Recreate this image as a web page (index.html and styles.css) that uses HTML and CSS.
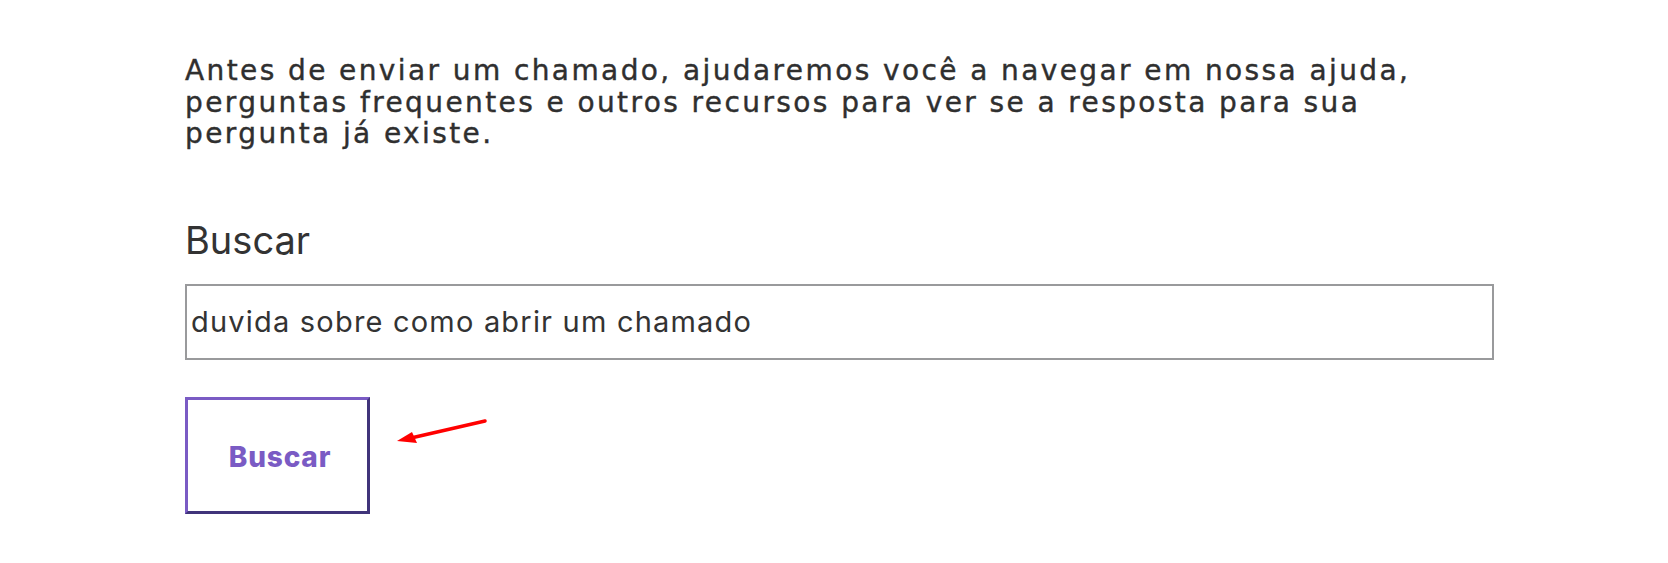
FILE: index.html
```html
<!DOCTYPE html>
<html lang="pt">
<head>
<meta charset="utf-8">
<link rel="stylesheet" href="styles.css">
</head>
<body>
<main class="page">
  <p class="intro">Antes de enviar um chamado, ajudaremos você a navegar em nossa ajuda, perguntas frequentes e outros recursos para ver se a resposta para sua pergunta já existe.</p>
  <h2 class="search-title">Buscar</h2>
  <div class="search-field">duvida sobre como abrir um chamado</div>
  <div class="actions">
    <button class="search-btn" type="button">Buscar</button>
    <svg class="arrow" width="100" height="40" viewBox="0 0 100 40">
      <line x1="96" y1="10" x2="22" y2="27" stroke="#ff0000" stroke-width="3.5" stroke-linecap="round"/>
      <polygon points="8,30 23,21 28,32" fill="#ff0000"/>
    </svg>
  </div>
</main>
</body>
</html>
```

FILE: styles.css
```css
html, body {
  margin: 0;
  padding: 0;
  background: #ffffff;
}
body {
  font-family: Inter, "Open Sans", sans-serif;
  color: #333333;
}
.page {
  width: 1309px;
  padding: 55px 0 0 185px;
}
.intro {
  margin: 0;
  font-family: "DejaVu Sans", sans-serif;
  font-size: 28px;
  line-height: 31.5px;
  font-weight: 400;
  letter-spacing: 2.4px;
  width: 1300px;
  color: #2f2f2f;
  -webkit-text-stroke: 0.4px #2f2f2f;
}
.search-title {
  margin: 68px 0 0 0;
  font-size: 38px;
  line-height: 44px;
  font-weight: 400;
}
.search-field {
  margin-top: 22px;
  height: 72px;
  border: 2px solid #999a9c;
  display: flex;
  align-items: center;
  padding: 0 4px;
  font-size: 29px;
  letter-spacing: 1.2px;
  color: #333333;
}
.actions {
  position: relative;
  margin-top: 37px;
}
.search-btn {
  width: 185px;
  height: 117px;
  background: #ffffff;
  border: 3px solid;
  border-color: #7a5bc4 #40347a #40347a #7a5bc4;
  font-family: Inter, sans-serif;
  font-weight: 800;
  font-size: 28px;
  letter-spacing: 0.8px;
  color: #7a5bc4;
  padding: 3px 0 0 5px;
  cursor: pointer;
}
.arrow {
  position: absolute;
  left: 204px;
  top: 14px;
}
```
